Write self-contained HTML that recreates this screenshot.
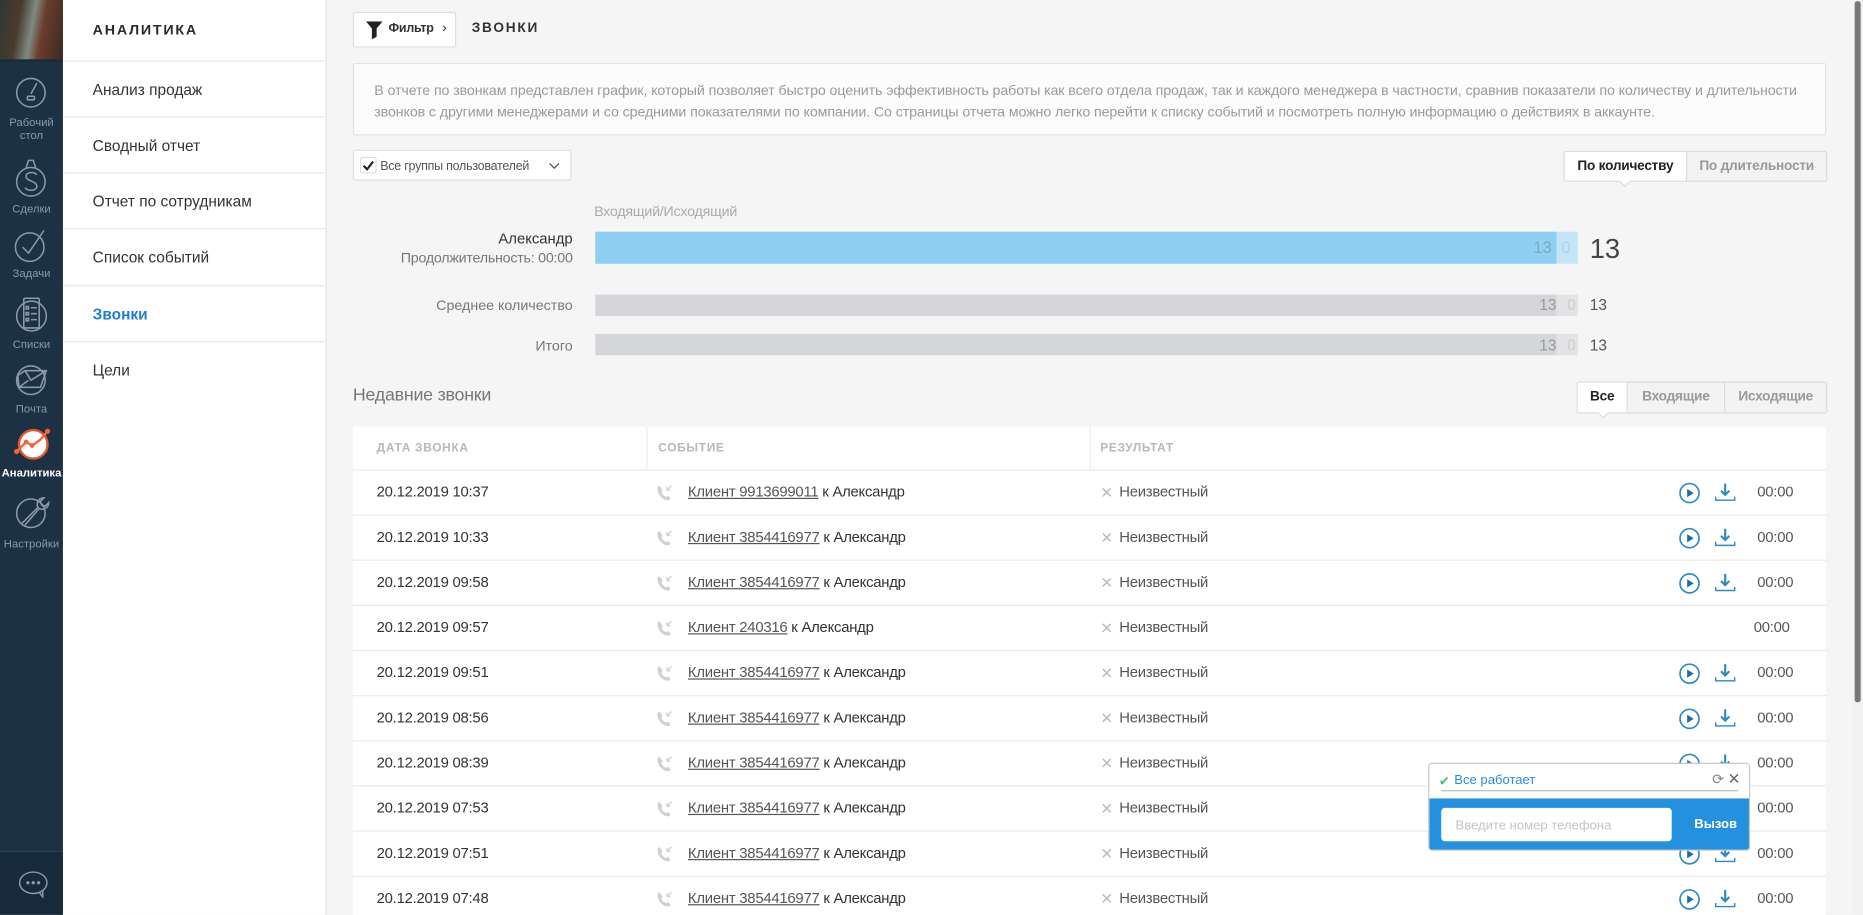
<!DOCTYPE html>
<html><head><meta charset="utf-8">
<style>
*{box-sizing:border-box;margin:0;padding:0}
html,body{width:1863px;height:915px;overflow:hidden;background:#f5f5f5}
body{font-family:"Liberation Sans","DejaVu Sans",sans-serif;}
#w{position:absolute;left:0;top:0;width:1568px;height:770px;transform:scale(1.18814);transform-origin:0 0;background:#f5f5f5;overflow:hidden}
.a{position:absolute}
.sb{left:0;top:0;width:53px;height:770px;background:#1c3144}
.sbi{position:absolute;left:0;width:53px;text-align:center;color:#8a9aaa;font-size:9.5px;line-height:11px}
.menu{left:53px;top:0;width:222px;height:770px;background:#fff;border-right:1px solid #e2e2e2}
.mi{position:absolute;left:0;width:222px;height:47px;border-top:1px solid #e6e6e6;padding-left:25px;line-height:47px;font-size:13px;color:#333}
.row{position:absolute;left:297px;width:1240px;height:38px;border-top:1px solid #eaeaea;background:#fff;font-size:12.5px;color:#333;letter-spacing:-.2px}
.row span{position:absolute;top:11px;white-space:nowrap}
.d{left:20px}
.ev{left:282px}
.ev u{color:#555;text-decoration:underline}
.x{left:629px;color:#bbb;font-size:13px}
.rs{left:645px;color:#555}
.t{left:1182px;color:#555}
</style></head><body><div id="w">

<div class="a sb">
 <div class="a" style="left:0;top:0;width:53px;height:50px;background:linear-gradient(100deg,#2f3a34 0%,#4a3a2e 30%,#7d8a82 50%,#6b3d2c 65%,#3a2a22 100%)"></div>
 <div class="a" style="left:0;top:50px;width:53px;height:2px;background:#1a2a3a"></div>
 <svg class="a" style="left:12px;top:64px" width="28" height="28" viewBox="0 0 28 28" fill="none" stroke="#8a9aaa" stroke-width="1.3"><circle cx="14" cy="14" r="12"/><path d="M14 15 L19 6"/><rect x="11" y="17" width="6" height="3" rx="1"/></svg>
 <div class="sbi" style="top:98px">Рабочий<br>стол</div>
 <svg class="a" style="left:12px;top:132px" width="28" height="36" viewBox="0 0 28 36" fill="none" stroke="#8a9aaa" stroke-width="1.3"><circle cx="14" cy="21" r="12"/><path d="M10 9 L12 3 h4 l2 6"/><path d="M19 15 c-3-3-10-2-9 2 c1 4 9 3 9 8 c0 4-8 4-10 1"/></svg>
 <div class="sbi" style="top:171px">Сделки</div>
 <svg class="a" style="left:12px;top:192px" width="28" height="30" viewBox="0 0 28 30" fill="none" stroke="#8a9aaa" stroke-width="1.3"><circle cx="13" cy="16" r="12"/><path d="M7 16 l5 5 l13-19"/></svg>
 <div class="sbi" style="top:225px">Задачи</div>
 <svg class="a" style="left:13px;top:248px" width="27" height="33" viewBox="0 0 27 33" fill="none" stroke="#8a9aaa" stroke-width="1.3"><circle cx="13.5" cy="18" r="12.5"/><rect x="7" y="3" width="13" height="25" rx="1"/><path d="M9 10h2v2h-2zM9 15h2v2h-2zM9 20h2v2h-2zM13 11h5M13 16h5M13 21h5"/></svg>
 <div class="sbi" style="top:285px">Списки</div>
 <svg class="a" style="left:12px;top:305px" width="30" height="30" viewBox="0 0 30 30" fill="none" stroke="#8a9aaa" stroke-width="1.3"><circle cx="14" cy="15" r="12"/><path d="M3 11 l6-4 h18 l-5 14 H4z M9 7 l5 8 l13-8 M4 21 l8-6"/></svg>
 <div class="sbi" style="top:339px">Почта</div>
 <svg class="a" style="left:10px;top:358px" width="36" height="30" viewBox="0 0 36 30"><circle cx="18" cy="16" r="12" fill="#fff" stroke="#e8532d" stroke-width="2"/><path d="M4 22 L12 14 L17 17 L24 12 L30 5" fill="none" stroke="#f2653a" stroke-width="2"/><circle cx="4" cy="22" r="2.2" fill="#f2653a"/><circle cx="12" cy="14" r="2" fill="#f2653a"/><circle cx="17" cy="17" r="2" fill="#f2653a"/><circle cx="30" cy="5" r="2.2" fill="#f2653a"/></svg>
 <div class="sbi" style="top:393px;color:#fff;font-weight:bold">Аналитика</div>
 <svg class="a" style="left:12px;top:415px" width="32" height="32" viewBox="0 0 32 32" fill="none" stroke="#8a9aaa" stroke-width="1.3"><circle cx="14" cy="17" r="12"/><path d="M6 26 L20 12 c-2-4 1-8 5-8 l-3 3 l1 3 l3 1 l3-3 c0 4-4 7-8 5 L9 27"/></svg>
 <div class="sbi" style="top:453px">Настройки</div>
 <div class="a" style="left:0;top:716px;width:53px;height:54px;background:#172a3b;border-top:1px solid #26445e"></div>
 <svg class="a" style="left:15px;top:732px" width="26" height="24" viewBox="0 0 26 24" fill="none" stroke="#8a9aaa" stroke-width="1.2"><ellipse cx="13" cy="11" rx="11.5" ry="9"/><path d="M18 19 l3 4 l0-5"/><circle cx="8.5" cy="11" r=".8" fill="#8a9aaa"/><circle cx="13" cy="11" r=".8" fill="#8a9aaa"/><circle cx="17.5" cy="11" r=".8" fill="#8a9aaa"/></svg>
</div>

<div class="a menu">
 <div class="a" style="left:25px;top:18px;font-size:12px;font-weight:bold;letter-spacing:1.5px;color:#2a2a2a">АНАЛИТИКА</div>
 <div class="mi" style="top:51px">Анализ продаж</div>
 <div class="mi" style="top:98px">Сводный отчет</div>
 <div class="mi" style="top:145px">Отчет по сотрудникам</div>
 <div class="mi" style="top:192px">Список событий</div>
 <div class="mi" style="top:240px;color:#1f7ed3;font-weight:bold">Звонки</div>
 <div class="mi" style="top:287px">Цели</div>
</div>

<div class="a" style="left:297px;top:10px;width:87px;height:30px;background:#fff;border:1px solid #dedede;border-radius:2px">
 <svg class="a" style="left:10px;top:7px" width="14" height="15" viewBox="0 0 14 15"><path d="M0 0h14l-5 6v7l-4 2V6z" fill="#222"/></svg>
 <span class="a" style="left:29px;top:7px;font-size:10.5px;font-weight:bold;color:#333;letter-spacing:-.2px">Фильтр</span>
 <span class="a" style="left:74px;top:5px;font-size:12px;color:#333">›</span>
</div>
<div class="a" style="left:397px;top:18px;font-size:11.5px;font-weight:bold;letter-spacing:1.5px;color:#333">ЗВОНКИ</div>

<div class="a" style="left:297px;top:53px;width:1240px;height:61px;background:#fcfcfc;border:1px solid #e2e2e2;border-radius:2px;padding:14px 17px;font-size:12px;line-height:17.5px;color:#9a9a9a;letter-spacing:-.1px">В отчете по звонкам представлен график, который позволяет быстро оценить эффективность работы как всего отдела продаж, так и каждого менеджера в частности, сравнив показатели по количеству и длительности звонков с другими менеджерами и со средними показателями по компании. Со страницы отчета можно легко перейти к списку событий и посмотреть полную информацию о действиях в аккаунте.</div>

<div class="a" style="left:297px;top:126px;width:184px;height:26px;background:#fff;border:1px solid #ddd;border-radius:2px">
 <div class="a" style="left:5px;top:5px;width:14px;height:14px;border:1px solid #ddd;border-radius:2px"></div>
 <svg class="a" style="left:7px;top:8px" width="10" height="9" viewBox="0 0 10 9"><path d="M1 4.5 l3 3 l5-6.5" fill="none" stroke="#222" stroke-width="1.8"/></svg>
 <span class="a" style="left:22px;top:7px;font-size:10.5px;color:#555;letter-spacing:-.2px">Все группы пользователей</span>
 <svg class="a" style="left:164px;top:10px" width="9" height="6" viewBox="0 0 9 6"><path d="M.5.5 l4 4 l4-4" fill="none" stroke="#444" stroke-width="1"/></svg>
</div>

<div class="a" style="left:1316px;top:127px;width:222px;height:26px;background:#f3f3f3;border:1px solid #dcdcdc;border-radius:2px;font-size:11.5px;font-weight:bold;letter-spacing:-.2px">
 <div class="a" style="left:0;top:0;width:103px;height:24px;background:#fff;border-right:1px solid #dcdcdc;text-align:center;line-height:24px;color:#222">По количеству</div>
 <div class="a" style="left:103px;top:0;width:117px;height:24px;text-align:center;line-height:24px;color:#999">По длительности</div>
 <div class="a" style="left:47px;top:21px;width:7px;height:7px;background:#fff;border-right:1px solid #dcdcdc;border-bottom:1px solid #dcdcdc;transform:rotate(45deg)"></div>
</div>

<div class="a" style="left:500px;top:171px;font-size:12px;color:#aaa;letter-spacing:-.2px">Входящий/Исходящий</div>
<div class="a" style="left:300px;top:194px;width:182px;text-align:right;font-size:12.5px;color:#333">Александр</div>
<div class="a" style="left:300px;top:210px;width:182px;text-align:right;font-size:12px;color:#777;letter-spacing:-.2px">Продолжительность: 00:00</div>
<div class="a" style="left:501px;top:195px;width:809px;height:27px;background:#8fcff1"></div>
<div class="a" style="left:1310px;top:195px;width:18px;height:27px;background:#c4e5f7"></div>
<div class="a" style="left:1280px;top:200px;width:26px;text-align:right;font-size:14px;color:#7aaac8">13</div>
<div class="a" style="left:1314px;top:200px;font-size:14px;color:#a9d4ee">0</div>
<div class="a" style="left:1338px;top:196px;font-size:23px;color:#444">13</div>

<div class="a" style="left:300px;top:250px;width:182px;text-align:right;font-size:12px;color:#777">Среднее количество</div>
<div class="a" style="left:501px;top:248px;width:809px;height:18px;background:#d5d6da"></div>
<div class="a" style="left:1310px;top:248px;width:18px;height:18px;background:#e3e3e5"></div>
<div class="a" style="left:1280px;top:249px;width:30px;text-align:right;font-size:13px;color:#999">13</div>
<div class="a" style="left:1319px;top:249px;font-size:13px;color:#ccc">0</div>
<div class="a" style="left:1338px;top:249px;font-size:13px;color:#555">13</div>

<div class="a" style="left:300px;top:284px;width:182px;text-align:right;font-size:12px;color:#777">Итого</div>
<div class="a" style="left:501px;top:281px;width:809px;height:18px;background:#d5d6da"></div>
<div class="a" style="left:1310px;top:281px;width:18px;height:18px;background:#e3e3e5"></div>
<div class="a" style="left:1280px;top:283px;width:30px;text-align:right;font-size:13px;color:#999">13</div>
<div class="a" style="left:1319px;top:283px;font-size:13px;color:#ccc">0</div>
<div class="a" style="left:1338px;top:283px;font-size:13px;color:#555">13</div>

<div class="a" style="left:297px;top:324px;font-size:15px;color:#777;letter-spacing:-.2px">Недавние звонки</div>
<div class="a" style="left:1327px;top:321px;width:211px;height:27px;background:#f3f3f3;border:1px solid #dcdcdc;border-radius:2px;font-size:11.5px;font-weight:bold;color:#999;letter-spacing:-.2px">
 <div class="a" style="left:0;top:0;width:42px;height:25px;background:#fff;border-right:1px solid #dcdcdc;text-align:center;line-height:25px;color:#222">Все</div>
 <div class="a" style="left:42px;top:0;width:82px;height:25px;border-right:1px solid #dcdcdc;text-align:center;line-height:25px">Входящие</div>
 <div class="a" style="left:124px;top:0;width:85px;height:25px;text-align:center;line-height:25px">Исходящие</div>
 <div class="a" style="left:18px;top:22px;width:7px;height:7px;background:#fff;border-right:1px solid #dcdcdc;border-bottom:1px solid #dcdcdc;transform:rotate(45deg)"></div>
</div>

<div class="a" style="left:297px;top:359px;width:1240px;height:36px;background:#fff;font-size:10px;font-weight:bold;letter-spacing:.6px;color:#b5b8c0">
 <span class="a" style="left:20px;top:13px">ДАТА ЗВОНКА</span>
 <div class="a" style="left:247px;top:0;width:1px;height:36px;background:#ececec"></div>
 <span class="a" style="left:257px;top:13px">СОБЫТИЕ</span>
 <div class="a" style="left:620px;top:0;width:1px;height:36px;background:#ececec"></div>
 <span class="a" style="left:629px;top:13px">РЕЗУЛЬТАТ</span>
</div>

<svg width="0" height="0" style="position:absolute"><defs>
<symbol id="ph" viewBox="0 0 16 16"><path d="M3 2 c-2 1-2 4 0 8 c2 3 5 5 8 5 c1 0 2-1 2-2 l-2-2 l-2 1 c-2-1-3-2-4-4 l1-2 l-2-3z" fill="#d0d0d0"/><path d="M10 6 l4-4 M10 6 v-3 M10 6 h3" stroke="#d0d0d0" stroke-width="1.2" fill="none"/></symbol>
<symbol id="pl" viewBox="0 0 18 18"><circle cx="9" cy="9" r="8" fill="none" stroke="#2b8bc2" stroke-width="1.4"/><path d="M7 5.5 v7 l5.5-3.5z" fill="#1a6fa3"/></symbol>
<symbol id="dl" viewBox="0 0 18 18"><path d="M9 2 v9 M5.5 8 l3.5 3.5 l3.5-3.5" stroke="#2b8bc2" stroke-width="1.8" fill="none"/><path d="M1 13 v3 h16 v-3" stroke="#2b8bc2" stroke-width="1.2" fill="none"/></symbol>
</defs></svg>

<div class="row" style="top:395px"><span class="d">20.12.2019 10:37</span><svg class="a" style="left:255px;top:11px" width="15" height="15"><use href="#ph"/></svg><span class="ev"><u>Клиент 9913699011</u> к Александр</span><span class="x">✕</span><span class="rs">Неизвестный</span><svg class="a" style="left:1116px;top:10px" width="18" height="18"><use href="#pl"/></svg><svg class="a" style="left:1146px;top:9px" width="18" height="18"><use href="#dl"/></svg><span class="t">00:00</span></div>
<div class="row" style="top:433px"><span class="d">20.12.2019 10:33</span><svg class="a" style="left:255px;top:11px" width="15" height="15"><use href="#ph"/></svg><span class="ev"><u>Клиент 3854416977</u> к Александр</span><span class="x">✕</span><span class="rs">Неизвестный</span><svg class="a" style="left:1116px;top:10px" width="18" height="18"><use href="#pl"/></svg><svg class="a" style="left:1146px;top:9px" width="18" height="18"><use href="#dl"/></svg><span class="t">00:00</span></div>
<div class="row" style="top:471px"><span class="d">20.12.2019 09:58</span><svg class="a" style="left:255px;top:11px" width="15" height="15"><use href="#ph"/></svg><span class="ev"><u>Клиент 3854416977</u> к Александр</span><span class="x">✕</span><span class="rs">Неизвестный</span><svg class="a" style="left:1116px;top:10px" width="18" height="18"><use href="#pl"/></svg><svg class="a" style="left:1146px;top:9px" width="18" height="18"><use href="#dl"/></svg><span class="t">00:00</span></div>
<div class="row" style="top:509px"><span class="d">20.12.2019 09:57</span><svg class="a" style="left:255px;top:11px" width="15" height="15"><use href="#ph"/></svg><span class="ev"><u>Клиент 240316</u> к Александр</span><span class="x">✕</span><span class="rs">Неизвестный</span><span class="t" style="left:1179px">00:00</span></div>
<div class="row" style="top:547px"><span class="d">20.12.2019 09:51</span><svg class="a" style="left:255px;top:11px" width="15" height="15"><use href="#ph"/></svg><span class="ev"><u>Клиент 3854416977</u> к Александр</span><span class="x">✕</span><span class="rs">Неизвестный</span><svg class="a" style="left:1116px;top:10px" width="18" height="18"><use href="#pl"/></svg><svg class="a" style="left:1146px;top:9px" width="18" height="18"><use href="#dl"/></svg><span class="t">00:00</span></div>
<div class="row" style="top:585px"><span class="d">20.12.2019 08:56</span><svg class="a" style="left:255px;top:11px" width="15" height="15"><use href="#ph"/></svg><span class="ev"><u>Клиент 3854416977</u> к Александр</span><span class="x">✕</span><span class="rs">Неизвестный</span><svg class="a" style="left:1116px;top:10px" width="18" height="18"><use href="#pl"/></svg><svg class="a" style="left:1146px;top:9px" width="18" height="18"><use href="#dl"/></svg><span class="t">00:00</span></div>
<div class="row" style="top:623px"><span class="d">20.12.2019 08:39</span><svg class="a" style="left:255px;top:11px" width="15" height="15"><use href="#ph"/></svg><span class="ev"><u>Клиент 3854416977</u> к Александр</span><span class="x">✕</span><span class="rs">Неизвестный</span><svg class="a" style="left:1116px;top:10px" width="18" height="18"><use href="#pl"/></svg><svg class="a" style="left:1146px;top:9px" width="18" height="18"><use href="#dl"/></svg><span class="t">00:00</span></div>
<div class="row" style="top:661px"><span class="d">20.12.2019 07:53</span><svg class="a" style="left:255px;top:11px" width="15" height="15"><use href="#ph"/></svg><span class="ev"><u>Клиент 3854416977</u> к Александр</span><span class="x">✕</span><span class="rs">Неизвестный</span><svg class="a" style="left:1116px;top:10px" width="18" height="18"><use href="#pl"/></svg><svg class="a" style="left:1146px;top:9px" width="18" height="18"><use href="#dl"/></svg><span class="t">00:00</span></div>
<div class="row" style="top:699px"><span class="d">20.12.2019 07:51</span><svg class="a" style="left:255px;top:11px" width="15" height="15"><use href="#ph"/></svg><span class="ev"><u>Клиент 3854416977</u> к Александр</span><span class="x">✕</span><span class="rs">Неизвестный</span><svg class="a" style="left:1116px;top:10px" width="18" height="18"><use href="#pl"/></svg><svg class="a" style="left:1146px;top:9px" width="18" height="18"><use href="#dl"/></svg><span class="t">00:00</span></div>
<div class="row" style="top:737px;height:40px"><span class="d">20.12.2019 07:48</span><svg class="a" style="left:255px;top:11px" width="15" height="15"><use href="#ph"/></svg><span class="ev"><u>Клиент 3854416977</u> к Александр</span><span class="x">✕</span><span class="rs">Неизвестный</span><svg class="a" style="left:1116px;top:10px" width="18" height="18"><use href="#pl"/></svg><svg class="a" style="left:1146px;top:9px" width="18" height="18"><use href="#dl"/></svg><span class="t">00:00</span></div>

<div class="a" style="left:1202px;top:642px;width:271px;height:74px;background:#fff;border:1px solid #c8c8c8;border-radius:3px;overflow:hidden">
 <span class="a" style="left:8px;top:8px;font-size:11px;color:#3bc46a">✔</span>
 <span class="a" style="left:21px;top:8px;font-size:11px;color:#2a8be0">Все работает</span>
 <span class="a" style="left:238px;top:6px;font-size:12px;color:#888">⟳</span>
 <span class="a" style="left:251px;top:5px;font-size:13px;color:#666">✕</span>
 <div class="a" style="left:10px;top:22px;width:250px;height:1px;background:#bbb"></div>
 <div class="a" style="left:0;top:29px;width:271px;height:45px;background:#2490e0"></div>
 <div class="a" style="left:10px;top:37px;width:194px;height:28px;background:#fff;border-radius:3px;font-size:11px;color:#c4c4c4;padding:9px 12px">Введите номер телефона</div>
 <span class="a" style="left:223px;top:45px;font-size:11px;font-weight:bold;color:#fff">Вызов</span>
</div>

<div class="a" style="left:1559px;top:0;width:9px;height:770px;background:#f1f1f1"></div>
<div class="a" style="left:1561px;top:1px;width:5px;height:590px;background:#777;border-radius:2px"></div>
</div></body></html>
